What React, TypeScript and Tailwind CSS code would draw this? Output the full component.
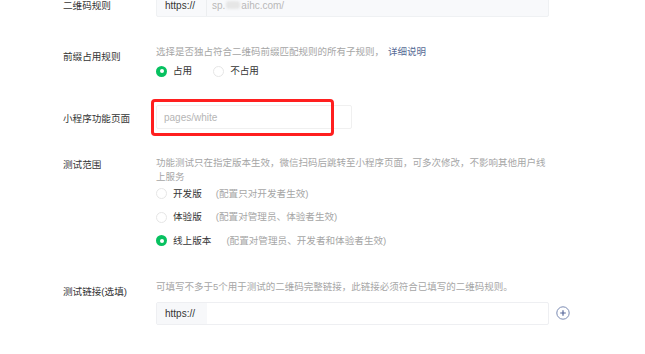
import React from "react";

const font = { fontFamily: '"Liberation Sans", "Noto Sans CJK SC", sans-serif' };

function Radio({ checked }: { checked?: boolean }) {
  return checked ? (
    <span className="flex h-[11px] w-[11px] shrink-0 items-center justify-center rounded-full bg-[#07c160]">
      <span className="h-[4px] w-[4px] rounded-full bg-white" />
    </span>
  ) : (
    <span className="h-[11px] w-[11px] shrink-0 rounded-full border border-[#e6e6e6] bg-white" />
  );
}

function Label({ children, pt }: { children: React.ReactNode; pt: string }) {
  return (
    <div className={`w-[93px] shrink-0 text-[9.6px] leading-[14px] text-[#353535] ${pt}`}>{children}</div>
  );
}

export default function App() {
  return (
    <div className="h-[354px] w-[645px] overflow-hidden bg-white pl-[63px]" style={font}>
      {/* Row 1 */}
      <div className="-mt-[7px] flex items-center">
        <Label pt="pt-[2px]">二维码规则</Label>
        <div className="flex h-[24px] w-[393px] items-center rounded-[2px] border border-[#eff1f3] bg-[#f8f9fb] text-[10px]">
          <div className="flex h-full w-[50px] items-center border-r border-[#eceef0] pl-[8px] text-[#353535]">https://</div>
          <div className="flex items-center pl-[5px] text-[#b8b8b8]">
            sp.<span className="mx-[1px] inline-block h-[8px] w-[14px] rounded-[3px] bg-[#e6e6e6] blur-[1px]" />aihc.com/
          </div>
        </div>
      </div>

      {/* Row 2 */}
      <div className="mt-[28px] flex">
        <Label pt="pt-[5px]">前缀占用规则</Label>
        <div>
          <div className="text-[9.5px] leading-[14px] text-[#a6a6a6]">
            选择是否独占符合二维码前缀匹配规则的所有子规则，
            <span className="ml-[4px] text-[#576b95]">详细说明</span>
          </div>
          <div className="mt-[4px] flex h-[16px] items-center text-[9.6px] text-[#353535]">
            <Radio checked />
            <span className="ml-[6px]">占用</span>
            <span className="ml-[21px]" />
            <Radio />
            <span className="ml-[6px]">不占用</span>
          </div>
        </div>
      </div>

      {/* Row 3 */}
      <div className="mt-[26px] flex items-center">
        <Label pt="pt-[4px]">小程序功能页面</Label>
        <div className="relative">
          <div className="flex h-[24px] w-[196px] items-center rounded-[2px] border border-[#f0f0f0] bg-white pl-[7px] text-[10px] text-[#b5b5b5]">
            pages/white
          </div>
          <div className="absolute -left-[5px] -top-[6px] h-[37px] w-[183px] rounded-[4px] border-[3px] border-[#ff1f1f]" />
        </div>
      </div>

      {/* Row 4 */}
      <div className="mt-[27px] flex">
        <Label pt="pt-[2px]">测试范围</Label>
        <div>
          <div className="w-[392px] text-[9.5px] leading-[14px] text-[#a6a6a6]">
            功能测试只在指定版本生效，微信扫码后跳转至小程序页面，可多次修改，不影响其他用户线上服务
          </div>
          <div className="-mt-[2px] text-[9.6px]">
            <div className="flex h-[23.5px] items-center">
              <Radio />
              <span className="ml-[6px] text-[#353535]">开发版</span>
              <span className="ml-[14px] text-[#a6a6a6]">(配置只对开发者生效)</span>
            </div>
            <div className="flex h-[23.5px] items-center">
              <Radio />
              <span className="ml-[6px] text-[#353535]">体验版</span>
              <span className="ml-[14px] text-[#a6a6a6]">(配置对管理员、体验者生效)</span>
            </div>
            <div className="flex h-[23.5px] items-center">
              <Radio checked />
              <span className="ml-[6px] text-[#353535]">线上版本</span>
              <span className="ml-[15px] text-[#a6a6a6]">(配置对管理员、开发者和体验者生效)</span>
            </div>
          </div>
        </div>
      </div>

      {/* Row 5 */}
      <div className="mt-[27px] flex">
        <Label pt="pt-[5px]">测试链接(选填)</Label>
        <div>
          <div className="text-[9.5px] leading-[14px] text-[#a6a6a6]">
            可填写不多于5个用于测试的二维码完整链接，此链接必须符合已填写的二维码规则。
          </div>
          <div className="mt-[8px] flex items-center">
            <div className="flex h-[23px] w-[393px] items-center rounded-[2px] border border-[#eeeff2] bg-white text-[10px]">
              <div className="flex h-full w-[50px] items-center bg-[#f7f8fa] pl-[8px] text-[#353535]">https://</div>
            </div>
            <svg className="ml-[7px]" width="14" height="14" viewBox="0 0 14 14">
              <circle cx="7" cy="7" r="6.2" fill="none" stroke="#7b8bb3" strokeWidth="1" />
              <path d="M7 4.2v5.6M4.2 7h5.6" stroke="#56679a" strokeWidth="1.2" />
            </svg>
          </div>
        </div>
      </div>
    </div>
  );
}
